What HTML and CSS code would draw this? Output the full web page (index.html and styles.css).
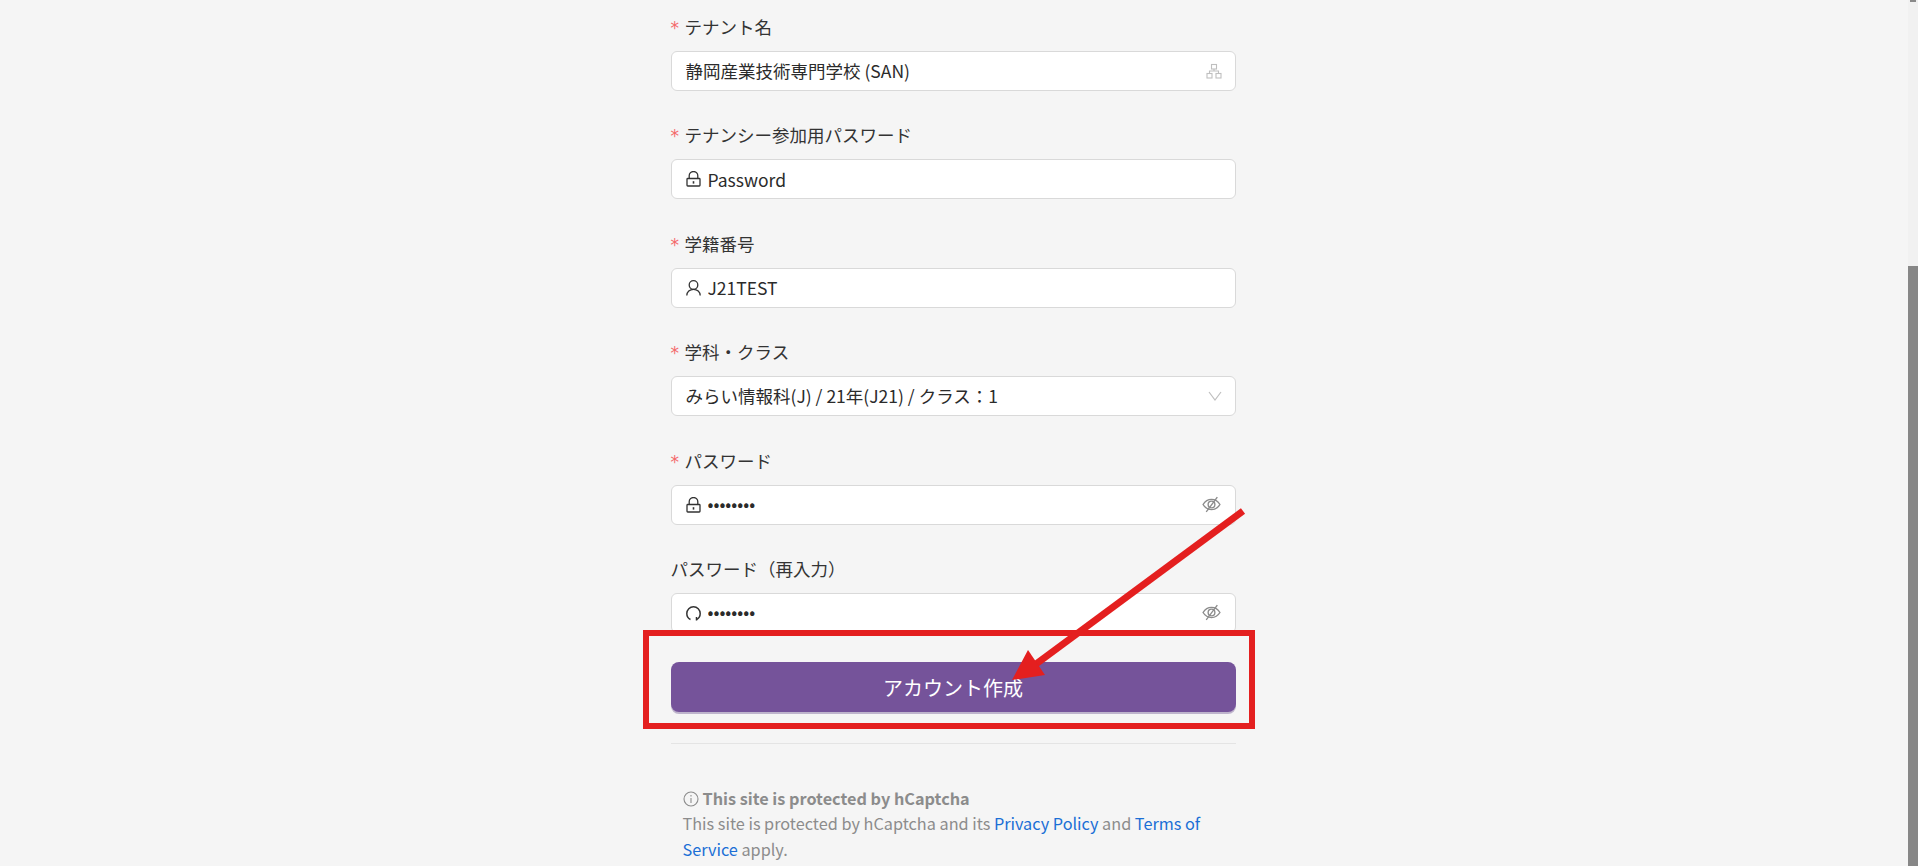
FILE: index.html
```html
<!DOCTYPE html>
<html lang="ja">
<head>
    <meta charset="UTF-8">
    <meta name="viewport" content="width=device-width, initial-scale=1.0">
    <title>アカウント作成</title>
    <link rel="stylesheet" href="styles.css">
</head>
<body>
    <div class="page">
        <main class="content">
            <form class="form">
                <div class="field">
                    <label class="label required">テナント名</label>
                    <div class="input-box">
                        <input class="input" type="text" value="静岡産業技術専門学校 (SAN)">
                        <svg class="icon-end tenant-icon" viewBox="0 0 16 16" fill="none" stroke="#bfbfbf" stroke-width="1.1"><rect x="5.5" y="1.5" width="5" height="4.500"/><rect x="1" y="10.500" width="5" height="4.500"/><rect x="10" y="10.500" width="5" height="4.500"/><path d="M8 6v2M3.500 10.500V8h9v2.500"/></svg>
                    </div>
                </div>
                <div class="field">
                    <label class="label required">テナンシー参加用パスワード</label>
                    <div class="input-box">
                        <svg class="icon-start" viewBox="0 0 15 16" fill="none" stroke="#333" stroke-width="1.3"><rect x="1" y="7.500" width="13" height="7.500" rx="0.800"/><path d="M3.200 7.500V4.800a4.300 4.300 0 0 1 8.600 0v2.700"/><path d="M7.500 10.200v2.400" stroke-width="1.600"/></svg>
                        <input class="input" type="text" value="Password">
                    </div>
                </div>
                <div class="field">
                    <label class="label required">学籍番号</label>
                    <div class="input-box">
                        <svg class="icon-start" viewBox="0 0 15 16" fill="none" stroke="#333" stroke-width="1.3"><circle cx="7.500" cy="5" r="4.300"/><path d="M0.800 15.500c0-3.800 3-6.200 6.700-6.200s6.700 2.400 6.700 6.200"/></svg>
                        <input class="input" type="text" value="J21TEST">
                    </div>
                </div>
                <div class="field">
                    <label class="label required">学科・クラス</label>
                    <div class="input-box">
                        <input class="input" type="text" value="みらい情報科(J) / 21年(J21) / クラス：1">
                        <svg class="icon-end arrow-icon" viewBox="0 0 14 10" fill="none" stroke="#bfbfbf" stroke-width="1.2"><path d="M1 1l6 8 6-8"/></svg>
                    </div>
                </div>
                <div class="field">
                    <label class="label required">パスワード</label>
                    <div class="input-box">
                        <svg class="icon-start" viewBox="0 0 15 16" fill="none" stroke="#333" stroke-width="1.3"><rect x="1" y="7.500" width="13" height="7.500" rx="0.800"/><path d="M3.200 7.500V4.800a4.300 4.300 0 0 1 8.600 0v2.700"/><path d="M7.500 10.200v2.400" stroke-width="1.600"/></svg>
                        <input class="input" type="password" value="password">
                        <svg class="icon-end eye-icon" viewBox="0 0 18 16" fill="none" stroke="#8c8c8c" stroke-width="1.3"><path d="M1 8c2-3.200 4.800-4.800 8-4.800s6 1.600 8 4.800c-2 3.200-4.800 4.800-8 4.800S3 11.200 1 8z"/><circle cx="9" cy="8" r="3.200"/><path d="M14.500 1L4 15"/></svg>
                    </div>
                </div>
                <div class="field">
                    <label class="label">パスワード（再入力）</label>
                    <div class="input-box">
                        <svg class="icon-start" viewBox="0 0 15 16" fill="none" stroke="#333" stroke-width="1.5"><path d="M4.500 14.500C2.200 13.500 0.800 11.200 0.800 8.500a6.700 6.700 0 0 1 13.400 0c0 2.700-1.400 5-3.700 6"/><path d="M10.500 12v3.500"/></svg>
                        <input class="input" type="password" value="password">
                        <svg class="icon-end eye-icon" viewBox="0 0 18 16" fill="none" stroke="#8c8c8c" stroke-width="1.3"><path d="M1 8c2-3.200 4.800-4.800 8-4.800s6 1.600 8 4.800c-2 3.200-4.800 4.800-8 4.800S3 11.200 1 8z"/><circle cx="9" cy="8" r="3.200"/><path d="M14.500 1L4 15"/></svg>
                    </div>
                </div>
                <button class="submit" type="button">アカウント作成</button>
            </form>
            <hr class="divider">
            <div class="notice">
                <p class="notice-title"><svg class="info-icon" viewBox="0 0 16 16" fill="none" stroke="#8c8c8c" stroke-width="1.1"><circle cx="8" cy="8" r="7"/><path d="M8 7v5M8 4v1.400"/></svg>This site is protected by hCaptcha</p>
                <p class="notice-text">This site is protected by hCaptcha and its <a href="#">Privacy Policy</a> and <a href="#">Terms of Service</a> apply.</p>
            </div>
        </main>
        <div class="scrollbar">
            <div class="scrollbar-arrow"></div>
            <div class="scrollbar-thumb"></div>
        </div>
    </div>
    <!-- annotation drawn over the page -->
    <div class="callout-box"></div>
    <svg class="callout-arrow" viewBox="0 0 1918 866" fill="#e41f1f">
        <path d="M1243 511L1036 664" stroke="#e41f1f" stroke-width="7" fill="none"/>
        <path d="M1012 680L1028 650L1045 675z"/>
    </svg>
</body>
</html>
```

FILE: styles.css
```css
html, body {
    margin: 0;
    padding: 0;
    height: 100%;
    overflow: hidden;
    background-color: #f5f5f5;
    font-family: "Noto Sans CJK JP", "Noto Sans", sans-serif;
    color: #2b2b2b;
}
.page {
    display: flex;
    height: 866px;
}
.content {
    flex: 1;
    display: flex;
    flex-direction: column;
    align-items: center;
    padding-top: 14px;
    padding-right: 2px;
    min-width: 0;
}
.form {
    width: 565px;
    display: flex;
    flex-direction: column;
}
.field {
    display: flex;
    flex-direction: column;
    height: 108.4px;
}
.label {
    font-size: 17.5px;
    line-height: 26px;
    height: 37px;
    color: #333;
}
.required::before {
    content: "*";
    display: inline-block;
    width: 14px;
    color: #f4686a;
    font-family: "DejaVu Sans", sans-serif;
    font-size: 17px;
}
.input-box {
    display: flex;
    align-items: center;
    gap: 7px;
    height: 40px;
    box-sizing: border-box;
    padding: 0 13px 0 14px;
    background-color: #fff;
    border: 1px solid #d9d9d9;
    border-radius: 6px;
}
.input {
    flex: 1;
    min-width: 0;
    border: none;
    outline: none;
    padding: 0 0 2px;
    background: transparent;
    font-family: inherit;
    font-size: 17.5px;
    color: #2b2b2b;
}
.icon-start + .input[type="text"] {
    padding: 0;
}
.icon-start {
    width: 15px;
    height: 16px;
}
.tenant-icon {
    width: 16px;
    height: 16px;
}
.arrow-icon {
    width: 14px;
    height: 10px;
}
.eye-icon {
    width: 19px;
    height: 17px;
    margin-right: 1px;
}
.submit {
    margin-top: -2px;
    height: 50px;
    border: none;
    border-radius: 8px;
    background-color: #75539a;
    box-shadow: 0 2px 0 rgba(90, 60, 130, 0.35);
    color: #fff;
    font-family: inherit;
    font-size: 20px;
}
.divider {
    width: 565px;
    margin: 31px 0 0;
    border: none;
    border-top: 1px solid #e4e4e4;
}
.notice {
    width: 541px;
    margin-top: 42px;
    font-size: 16.25px;
    line-height: 25.6px;
    color: #8c8c8c;
}
.notice p {
    margin: 0;
}
.notice-title {
    font-weight: 700;
    display: flex;
    align-items: center;
    gap: 4px;
    height: 24.6px;
}
.info-icon {
    width: 16px;
    height: 16px;
}
.notice a {
    color: #1b6fd6;
    text-decoration: none;
}
.scrollbar {
    width: 10px;
    background-color: #f1f1f1;
    display: flex;
    flex-direction: column;
    justify-content: space-between;
    align-items: center;
}
.scrollbar-arrow {
    width: 6px;
    height: 2px;
    background-color: #8a8a8a;
}
.scrollbar-thumb {
    width: 100%;
    height: 600px;
    background-color: #878787;
}
.callout-box {
    position: absolute;
    left: 643px;
    top: 630px;
    width: 612px;
    height: 99px;
    box-sizing: border-box;
    border: 6px solid #e41f1f;
}
.callout-arrow {
    position: absolute;
    left: 0;
    top: 0;
    width: 1918px;
    height: 866px;
}
```
